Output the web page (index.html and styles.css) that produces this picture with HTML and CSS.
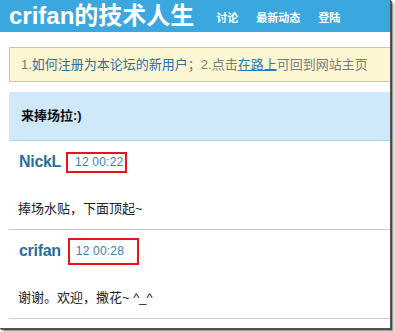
FILE: index.html
```html
<!DOCTYPE html>
<html lang="zh">
<head>
<meta charset="utf-8">
<title>crifan的技术人生</title>
<link rel="stylesheet" href="styles.css">
</head>
<body>
<div class="shot">
  <header class="topbar">
    <span class="brand">crifan的技术人生</span>
    <nav class="nav">
      <a class="nav-item">讨论</a>
      <a class="nav-item">最新动态</a>
      <a class="nav-item">登陆</a>
    </nav>
  </header>
  <main class="main">
    <div class="notice">1.<a class="link">如何注册为本论坛的新用户</a>；2.点击<a class="link under">在路上</a>可回到网站主页</div>
    <div class="topic-title">来捧场拉:)</div>
    <div class="post">
      <div class="meta"><span class="author">NickL</span><span class="time t1">12 00:22</span></div>
      <div class="content">捧场水贴，下面顶起~</div>
    </div>
    <div class="post">
      <div class="meta"><span class="author">crifan</span><span class="time t2">12 00:28</span></div>
      <div class="content">谢谢。欢迎，撒花~ ^_^</div>
    </div>
  </main>
</div>
</body>
</html>
```
FILE: styles.css
```css
html, body {
  margin: 0;
  padding: 0;
  background: #fff;
}
body {
  width: 395px;
  height: 332px;
  overflow: hidden;
  font-family: "Liberation Sans", "Noto Sans CJK SC", sans-serif;
}
.shot {
  width: 391px;
  height: 329px;
  overflow: hidden;
  background: #fff;
  border-right: 1px solid #555;
  border-bottom: 1px solid #555;
  box-sizing: border-box;
  box-shadow: 1px 1px 1px rgba(0,0,0,0.6), 3px 3px 2px rgba(0,0,0,0.3);
}
.topbar {
  height: 32px;
  background: #3aa8df;
  display: flex;
  align-items: center;
  padding-left: 9px;
}
.brand {
  color: #fff;
  font-weight: bold;
  font-size: 24px;
  line-height: 32px;
}
.nav {
  display: flex;
  gap: 18px;
  margin-left: 22px;
  padding-top: 2px;
}
.nav-item {
  color: #fff;
  font-weight: bold;
  font-size: 11px;
}
.main {
  padding: 15px 0 0 9px;
  margin-right: -12px;
}
.notice {
  height: 33px;
  line-height: 33px;
  background: #fdf6d2;
  border: 1px solid #cfc49d;
  padding-left: 11px;
  font-size: 13px;
  color: #7a7a7a;
  white-space: nowrap;
}
.link {
  color: #2d6f9f;
}
.link.under {
  color: #1e7dbd;
  text-decoration: underline;
}
.topic-title {
  margin-top: 10px;
  height: 48px;
  line-height: 48px;
  background: #cfe9fa;
  border-bottom: 1px solid #a9d3ee;
  padding-left: 12px;
  font-size: 13px;
  font-weight: bold;
  color: #111;
}
.post {
  height: 89px;
  box-sizing: border-box;
  padding: 10px 0 0 10px;
  border-bottom: 1px solid #c6cacd;
}
.meta {
  display: flex;
  align-items: center;
  height: 22px;
}
.author {
  font-size: 16px;
  font-weight: bold;
  color: #2a6e9c;
  letter-spacing: -0.3px;
}
.time {
  font-size: 12px;
  color: #3a7fb3;
  border: 2px solid #e8141b;
  box-sizing: border-box;
  letter-spacing: 0.2px;
}
.t1 {
  margin-left: 5px;
  height: 21px;
  line-height: 17px;
  padding: 0 2px 0 7px;
}
.t2 {
  margin-left: 7px;
  height: 27px;
  line-height: 23px;
  padding: 0 13px 0 6px;
}
.content {
  margin-top: 26px;
  line-height: 20px;
  font-size: 13px;
  color: #222;
  margin-left: -1px;
}
```
